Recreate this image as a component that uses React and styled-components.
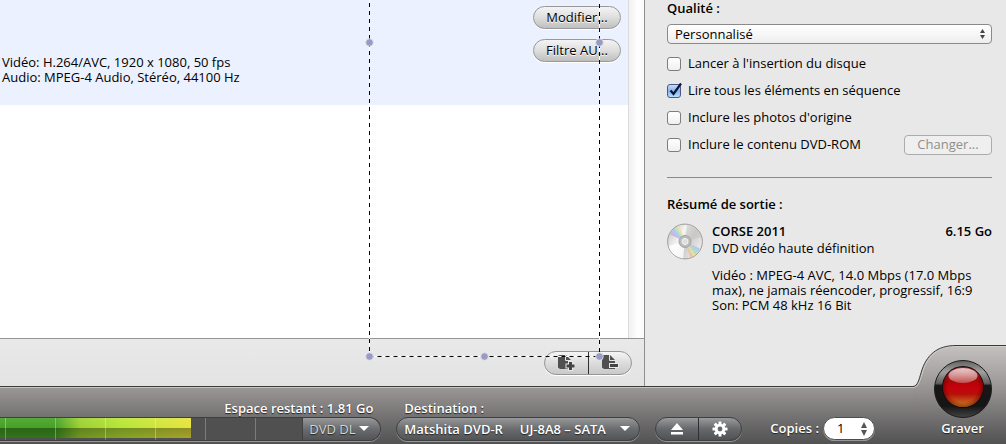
import { useState } from "react";
import styled, { createGlobalStyle, css } from "styled-components";

const GlobalStyle = createGlobalStyle`
  * {
    box-sizing: border-box;
  }

  body {
    margin: 0;
    background: #e8e8e8;
  }

  body, button, input, select {
    font-family: 'Open Sans', 'Noto Sans', sans-serif;
    font-size: 13px;
    line-height: 15px;
    color: #000;
  }
`

const Window = styled.div`
  display: flex;
  flex-direction: column;
  min-height: 100vh;
  overflow: hidden;
`
const Main = styled.main`
  flex: 1;
  display: flex;
`
const ContentPane = styled.section`
  position: relative;
  flex: 1;
  display: flex;
  flex-direction: column;
  border-right: 1px solid #8e8e8e;
`
const ListArea = styled.div`
  flex: 1;
  display: flex;
  background: #fff;
`
const List = styled.div`
  flex: 1;
`
const ScrollGutter = styled.div`
  width: 16px;
  border-left: 1px solid #dcdcdc;
  background: linear-gradient(to right, #f1f1f1, #fff 60%, #fafafa);
`
const ClipRow = styled.div`
  display: flex;
  justify-content: space-between;
  align-items: flex-start;
  padding: 6px 7px 20px 2px;
  background: #ebf1fe;
`
const ClipInfo = styled.p`
  align-self: flex-end;
  margin: 0;
`
const ClipActions = styled.div`
  display: flex;
  flex-direction: column;
  gap: 10px;
  padding-bottom: 23px;
`
const PillButton = styled.button`
  width: 88px;
  height: 23px;
  padding: 0;
  border: 1px solid #979899;
  border-radius: 12px;
  background: linear-gradient(#f4f4f4, #dedede 50%, #bfbfbf);
  box-shadow: 0 1px 0 #fff;
  text-shadow: 0 1px 0 #fff;
  font-weight: 500;
`
const ActionBar = styled.div`
  display: flex;
  justify-content: flex-end;
  align-items: center;
  height: 48px;
  padding-right: 12px;
  border-top: 1px solid #959595;
  background: linear-gradient(#e9e9e9, #e3e3e3);
`
const Segmented = styled.div`
  display: flex;
  height: 24px;
  border-radius: 12px;
  overflow: hidden;

  ${({ $dark }) => $dark ? css`
    width: 87px;
    border: 1px solid #3f4041;
    background: linear-gradient(#9a9b9d, #66686b 50%, #4f5153);
    box-shadow: 0 1px 0 #979797;
  ` : css`
    width: 88px;
    border: 1px solid #969696;
    background: linear-gradient(#f5f5f5, #dcdcdc 50%, #c9c9c9);
    box-shadow: 0 1px 0 #fff;
  `}
`
const Segment = styled.button`
  flex: 1;
  display: flex;
  justify-content: center;
  align-items: center;
  padding: 0;
  border: 0;
  background: none;

  & + & {
    border-left: 1px solid ${({ $dark }) => $dark ? '#2f2f2f' : '#969696'};
  }
`
const SelectionOverlay = styled.svg`
  position: absolute;
  top: 0;
  right: 40px;
  pointer-events: none;
`

const Sidebar = styled.aside`
  width: 361px;
  padding: 0 14px 0 22px;
  background: #e8e8e8;
`
const SidebarTitle = styled.h2`
  margin: 0;
  font-size: 13px;
  line-height: 16px;
  font-weight: 600;
`
const SelectWrapper = styled.div`
  position: relative;

  svg {
    position: absolute;
    top: 50%;
    right: ${({ $inset }) => $inset}px;
    transform: translateY(-50%);
    pointer-events: none;
  }
`
const QualitySelect = styled.select`
  appearance: none;
  display: block;
  width: 100%;
  height: 20px;
  margin: 8px 0 6px;
  padding: 0 7px;
  border: 1px solid #8a8a8a;
  border-radius: 4px;
  background: linear-gradient(#fff, #f7f7f7 50%, #ededed);
  line-height: 16px;
`
const OptionRow = styled.div`
  display: flex;
  justify-content: space-between;
  align-items: center;
  height: 27px;
`
const OptionLabel = styled.label`
  display: flex;
  align-items: center;
  gap: 7px;
`
const CheckWrapper = styled.span`
  position: relative;
  display: flex;

  svg {
    position: absolute;
    top: -2px;
    left: 0;
    pointer-events: none;
  }
`
const CheckInput = styled.input`
  appearance: none;
  width: 14px;
  height: 14px;
  margin: 0;
  border: 1px solid #7d7d7d;
  border-radius: 3px;
  background: linear-gradient(#fff, #f0f0f0);

  &:checked {
    border-color: #4c5688;
    background: linear-gradient(#c9dcf6, #86b2ec 50%, #b5e0ff);
  }
`
const ChangeButton = styled.button`
  width: 88px;
  height: 20px;
  padding: 0;
  border: 1px solid #ababab;
  border-radius: 4px;
  background: #efefef;
  color: #8e8e8e;
`
const Divider = styled.hr`
  height: 1px;
  margin: 19px 0 18px;
  border: 0;
  background: #8a8a8a;
`
const Summary = styled.div`
  display: flex;
  gap: 9px;
  margin-top: 11px;
`
const SummaryText = styled.div`
  flex: 1;

  p {
    margin: 0;
  }
`
const SummaryHead = styled.div`
  display: flex;
  justify-content: space-between;
  padding-bottom: 2px;
  line-height: 16px;
  font-weight: 600;
`
const SummaryDetails = styled.p`
  padding-top: 12px;
`

const Footer = styled.footer`
  display: flex;
  align-items: flex-start;
  height: 58px;
  border-top: 1px solid #3c3a3a;
  background: linear-gradient(#c8c4c4 0 1px, #9b9696 1px, #757373 50%, #525252);
  color: #fff;
  text-shadow: 0 1px 1px #222;
  font-weight: 600;
`
const DiscSpace = styled.div`
  flex: 1;
  padding-top: 14px;
`
const SpaceLabel = styled.div`
  padding-right: 8px;
  text-align: right;
`
const FooterLabel = styled.label`
  display: block;
  padding-left: 8px;
`
const GaugeRow = styled.div`
  display: flex;
  height: 24px;
  margin-top: 1px;
  border: 1px solid #3f3f3f;
  border-left: 0;
  border-radius: 0 12px 12px 0;
  box-shadow: 0 1px 0 #979797;
  overflow: hidden;
`
const Gauge = styled.div`
  flex: 1;
  background:
    repeating-linear-gradient(to right, transparent 0 5px, #ffffff40 5px 6px, transparent 6px 50px),
    #505050;
`
const GaugeFill = styled.div`
  height: 20px;
  background:
    repeating-linear-gradient(to right, transparent 0 5px, #ffffff50 5px 6px, transparent 6px 50px),
    linear-gradient(#ffffff18, transparent 49%, #00000060 50%, #00000048),
    linear-gradient(to right, #45a125 0 29%, #9dd030 42%, #b8e636 65%, #e8e33c);
`
const FooterSelect = styled.select`
  appearance: none;
  display: block;
  width: ${({ $width }) => $width}px;
  height: ${({ $attached }) => $attached ? 22 : 24}px;
  margin-top: ${({ $attached }) => $attached ? 0 : 1}px;
  padding: 0 ${({ $attached }) => $attached ? 6 : 7}px;
  border: ${({ $attached }) => $attached ? '0' : '1px solid #3f4041'};
  border-left: 1px solid #3f4041;
  border-radius: ${({ $attached }) => $attached ? '0 12px 12px 0' : '12px'};
  background: linear-gradient(#97989a, #6a6c6f 50%, #515355);
  box-shadow: ${({ $attached }) => $attached ? 'none' : '0 1px 0 #979797'};
  color: ${({ $attached }) => $attached ? '#d8d8d8' : '#fff'};
  font-weight: ${({ $attached }) => $attached ? 400 : 600};
  text-shadow: 0 1px 1px #222;
  white-space: pre;
`
const Destination = styled.div`
  margin-left: 15px;
  padding-top: 14px;
`
const Tools = styled.div`
  margin: 30px 0 0 15px;
`
const Copies = styled.div`
  display: flex;
  align-items: center;
  gap: 4px;
  margin: 30px 38px 0 28px;
`
const CopiesField = styled.div`
  display: flex;
  align-items: center;
  width: 52px;
  height: 23px;
  padding: 0 5px 0 11px;
  border: 1px solid #4c4c4c;
  border-radius: 12px;
  background: #fff;
  box-shadow: 0 1px 0 #979797;
`
const CopiesInput = styled.input`
  width: 100%;
  min-width: 0;
  padding: 0 2px;
  border: 0;
  background: none;
  outline: none;
`
const Stepper = styled.div`
  display: flex;
  flex-direction: column;
`
const StepButton = styled.button`
  display: flex;
  width: 10px;
  padding: 1px;
  border: 0;
  background: none;
`
const BurnCorner = styled.div`
  position: relative;
  display: flex;
  flex-direction: column;
  align-items: center;
  width: 93px;
  height: 99px;
  margin-top: -42px;
  padding: 14px 0 0 6px;
`
const CornerShape = styled.svg`
  position: absolute;
  top: 0;
  left: 0;
`
const BurnButton = styled.button`
  position: relative;
  display: flex;
  flex-direction: column;
  align-items: center;
  gap: 2px;
  padding: 0;
  border: 0;
  background: none;
  color: #fff;
  font-weight: 600;
  text-shadow: 0 1px 1px #222;
`

const UpDownArrows = () => (
  <svg width="5" height="10" viewBox="0 0 5 10" fill="#444">
    <path d="M2.5 0 5 4H0z M0 6h5L2.5 10z" />
  </svg>
)

const DownArrow = () => (
  <svg width="10" height="6" viewBox="0 0 10 6" fill="#fff">
    <path d="M0 0h10L5 5z" />
  </svg>
)

const PageIcon = ({ remove }) => (
  <svg width="18" height="18" viewBox="0 0 18 18">
    <path d="M1 2.5Q1 1 2.500 1H9l5 5v9H3L1 13.500z" fill="#505050" />
    <path d="M8.500 1v5.500H14" fill="none" stroke="#e4e4e4" />
    {remove ? (
      <path d="M9 10h8v3H9z" fill="#444" stroke="#e8e8e8" strokeWidth="2" paintOrder="stroke" />
    ) : (
      <path
        d="M12 8h3v2.500h2.500v3H15V16h-3v-2.500H9.500v-3H12z"
        fill="#444"
        stroke="#e8e8e8"
        strokeWidth="2"
        paintOrder="stroke"
      />
    )}
  </svg>
)

const EjectIcon = () => (
  <svg width="14" height="14" viewBox="0 0 14 14" fill="#fff">
    <path d="M7 1l6 7H1z M1 10h12v2.4H1z" />
  </svg>
)

const GearIcon = () => (
  <svg width="16" height="16" viewBox="0 0 16 16">
    <g fill="#fff">
      {[0, 45, 90, 135].map((angle) => (
        <rect key={angle} x="6.5" y="0.5" width="3" height="15" rx="0.6" transform={`rotate(${angle} 8 8)`} />
      ))}
      <circle cx="8" cy="8" r="5.2" />
    </g>
    <circle cx="8" cy="8" r="2.4" fill="#66686b" />
  </svg>
)

const DiscIcon = () => (
  <svg width="36" height="37" viewBox="0 0 36 37">
    <defs>
      <linearGradient id="disc" x1="0" y1="0.2" x2="1" y2="0.8">
        <stop offset="0" stopColor="#c9c6c6" />
        <stop offset="0.35" stopColor="#f6f5f5" />
        <stop offset="0.6" stopColor="#d2cece" />
        <stop offset="1" stopColor="#f2f2f2" />
      </linearGradient>
    </defs>
    <circle cx="18" cy="18.5" r="17.4" fill="url(#disc)" stroke="#9c9c9c" />
    <path d="M18 18.5 20 1.5A17 17 0 0 1 34.5 14z" fill="#c3bfc0" opacity="0.5" />
    <path d="M18 18.5 16 35.5A17 17 0 0 1 1.5 23z" fill="#fff" opacity="0.8" />
    <path d="M18 18.5 3.2 11.5A17 17 0 0 1 5 8z" fill="#c9b5e6" />
    <path d="M18 18.5 5 8A17 17 0 0 1 7.5 5.5z" fill="#a6cdee" />
    <path d="M18 18.5 7.5 5.5A17 17 0 0 1 10 4z" fill="#b9e3c0" />
    <path d="M18 18.5 10 4A17 17 0 0 1 12.5 2.6z" fill="#eedfae" />
    <path d="M18 18.5 23.5 34.4A17 17 0 0 0 26 33.2z" fill="#edc0a5" />
    <path d="M18 18.5 26 33.2A17 17 0 0 0 28.5 31.5z" fill="#e6dfa2" />
    <path d="M18 18.5 28.5 31.5A17 17 0 0 0 31 29z" fill="#b2dfb9" />
    <path d="M18 18.5 31 29A17 17 0 0 0 32.8 25.5z" fill="#b3cbea" />
    <circle cx="18" cy="18.5" r="6" fill="#bcbcbc" stroke="#a4a4a4" />
    <circle cx="18" cy="18.5" r="3" fill="#dedede" stroke="#f4f4f4" />
  </svg>
)

const BurnIcon = () => (
  <svg width="60" height="60" viewBox="0 0 60 60">
    <defs>
      <linearGradient id="ring" x1="0" y1="0" x2="0" y2="1">
        <stop offset="0" stopColor="#606060" />
        <stop offset="0.2" stopColor="#a0a0a0" />
        <stop offset="0.4" stopColor="#606060" />
        <stop offset="0.44" stopColor="#171717" />
        <stop offset="0.8" stopColor="#151515" />
        <stop offset="1" stopColor="#444" />
      </linearGradient>
      <linearGradient id="ball" x1="0" y1="0" x2="0" y2="1">
        <stop offset="0" stopColor="#b84040" />
        <stop offset="0.35" stopColor="#a80808" />
        <stop offset="0.5" stopColor="#c8000a" />
        <stop offset="0.68" stopColor="#b5100a" />
        <stop offset="1" stopColor="#d08a25" />
      </linearGradient>
      <radialGradient id="shade">
        <stop offset="0.75" stopColor="#600" stopOpacity="0" />
        <stop offset="1" stopColor="#500" stopOpacity="0.5" />
      </radialGradient>
      <linearGradient id="gloss" x1="0" y1="0" x2="0" y2="1">
        <stop offset="0" stopColor="#fff" stopOpacity="0.75" />
        <stop offset="1" stopColor="#fff" stopOpacity="0.3" />
      </linearGradient>
    </defs>
    <circle cx="30" cy="30" r="28.5" fill="url(#ring)" stroke="#1c1c1c" />
    <circle cx="30" cy="28" r="21" fill="#1a0808" />
    <circle cx="30" cy="28" r="20" fill="url(#ball)" />
    <circle cx="30" cy="28" r="20" fill="url(#shade)" />
    <ellipse cx="30" cy="16.5" rx="14.5" ry="7.5" fill="url(#gloss)" />
  </svg>
)

const Check = ({ label, defaultChecked }) => {
  const [checked, setChecked] = useState(Boolean(defaultChecked))
  return (
    <OptionLabel>
      <CheckWrapper>
        <CheckInput type="checkbox" checked={checked} onChange={() => setChecked(!checked)} />
        {checked && (
          <svg width="16" height="16" viewBox="0 0 16 16">
            <path d="M3.5 8.5 6.5 12 14 1.5" fill="none" stroke="#0c1638" strokeWidth="2.2" />
          </svg>
        )}
      </CheckWrapper>
      {label}
    </OptionLabel>
  )
}

const handles = [[5, 42], [235, 42], [5, 356], [120, 356], [235, 356]]

const App = () => {
  const [copies, setCopies] = useState(1)

  return (
    <>
      <GlobalStyle />
      <Window>
        <Main>
          <ContentPane>
            <ListArea>
              <List>
                <ClipRow>
                  <ClipInfo>
                    Vidéo: H.264/AVC, 1920 x 1080, 50 fps<br />
                    Audio: MPEG-4 Audio, Stéréo, 44100 Hz
                  </ClipInfo>
                  <ClipActions>
                    <PillButton type="button">Modifier...</PillButton>
                    <PillButton type="button">Filtre AU...</PillButton>
                  </ClipActions>
                </ClipRow>
              </List>
              <ScrollGutter />
            </ListArea>
            <ActionBar>
              <Segmented>
                <Segment type="button" aria-label="Ajouter"><PageIcon /></Segment>
                <Segment type="button" aria-label="Supprimer"><PageIcon remove /></Segment>
              </Segmented>
            </ActionBar>
            <SelectionOverlay width="240" height="362" viewBox="0 0 240 362">
              <path d="M5.5 0V356.5H235.5V0" fill="none" stroke="#fff" />
              <path d="M5.5 3V356.5 M5.5 356.5H235.5 M235.5 4V356.5" fill="none" stroke="#000" strokeDasharray="4 4" />
              {handles.map(([x, y]) => (
                <circle key={`${x}-${y}`} cx={x + 0.5} cy={y + 0.5} r="3.8" fill="#9a9ac2" stroke="#e4e4f2" strokeWidth="0.8" />
              ))}
            </SelectionOverlay>
          </ContentPane>

          <Sidebar>
            <SidebarTitle as="label" htmlFor="quality">Qualité :</SidebarTitle>
            <SelectWrapper $inset={7}>
              <QualitySelect id="quality">
                <option>Personnalisé</option>
              </QualitySelect>
              <UpDownArrows />
            </SelectWrapper>
            <OptionRow><Check label="Lancer à l'insertion du disque" /></OptionRow>
            <OptionRow><Check label="Lire tous les éléments en séquence" defaultChecked /></OptionRow>
            <OptionRow><Check label="Inclure les photos d'origine" /></OptionRow>
            <OptionRow>
              <Check label="Inclure le contenu DVD-ROM" />
              <ChangeButton type="button" disabled>Changer...</ChangeButton>
            </OptionRow>
            <Divider />
            <SidebarTitle>Résumé de sortie :</SidebarTitle>
            <Summary>
              <DiscIcon />
              <SummaryText>
                <SummaryHead>
                  <span>CORSE 2011</span>
                  <span>6.15 Go</span>
                </SummaryHead>
                <p>DVD vidéo haute définition</p>
                <SummaryDetails>
                  Vidéo : MPEG-4 AVC, 14.0 Mbps (17.0 Mbps max), ne jamais réencoder, progressif, 16:9<br />
                  Son: PCM 48 kHz 16 Bit
                </SummaryDetails>
              </SummaryText>
            </Summary>
          </Sidebar>
        </Main>

        <Footer>
          <DiscSpace>
            <SpaceLabel>Espace restant : 1.81 Go</SpaceLabel>
            <GaugeRow>
              <Gauge>
                <GaugeFill style={{ width: `${(191 / 303) * 100}%` }} />
              </Gauge>
              <SelectWrapper $inset={11}>
                <FooterSelect $width={78} $attached aria-label="Type de disque">
                  <option>DVD DL</option>
                </FooterSelect>
                <DownArrow />
              </SelectWrapper>
            </GaugeRow>
          </DiscSpace>
          <Destination>
            <FooterLabel htmlFor="destination">Destination :</FooterLabel>
            <SelectWrapper $inset={10}>
              <FooterSelect id="destination" $width={244}>
                <option>{'Matshita DVD-R\u00a0\u00a0\u00a0\u00a0 UJ-8A8 – SATA'}</option>
              </FooterSelect>
              <DownArrow />
            </SelectWrapper>
          </Destination>
          <Tools>
            <Segmented $dark>
              <Segment $dark type="button" aria-label="Éjecter"><EjectIcon /></Segment>
              <Segment $dark type="button" aria-label="Options"><GearIcon /></Segment>
            </Segmented>
          </Tools>
          <Copies>
            <label htmlFor="copies">Copies :</label>
            <CopiesField>
              <CopiesInput
                id="copies"
                inputMode="numeric"
                value={copies}
                onChange={(e) => setCopies(Number(e.target.value) || 1)}
              />
              <Stepper>
                <StepButton type="button" aria-label="Plus" onClick={() => setCopies(copies + 1)}>
                  <svg width="8" height="6" viewBox="0 0 8 6" fill="#555"><path d="M4 0 7 6H1z" /></svg>
                </StepButton>
                <StepButton type="button" aria-label="Moins" onClick={() => setCopies(Math.max(1, copies - 1))}>
                  <svg width="8" height="6" viewBox="0 0 8 6" fill="#555"><path d="M1 0h6L4 6z" /></svg>
                </StepButton>
              </Stepper>
            </CopiesField>
          </Copies>
          <BurnCorner>
            <CornerShape width="93" height="99" viewBox="0 0 93 99">
              <defs>
                <linearGradient id="corner" x1="0" y1="0" x2="0" y2="1">
                  <stop offset="0" stopColor="#c6c1c1" />
                  <stop offset="0.42" stopColor="#9b9696" />
                  <stop offset="0.71" stopColor="#757373" />
                  <stop offset="1" stopColor="#525252" />
                </linearGradient>
              </defs>
              <path d="M0 99V42C5 41 6 34 8 28C13 10 24 0.5 43 0.5H93V99z" fill="url(#corner)" />
              <path d="M0 42.5C6 42 7 35 9 29C14 11 25 1.5 43 1.5H93" fill="none" stroke="#d2cece" />
              <path d="M0 41.5C5 41 6 34 8 28C13 10 24 0.5 43 0.5H93" fill="none" stroke="#3c3a3a" />
            </CornerShape>
            <BurnButton type="button">
              <BurnIcon />
              Graver
            </BurnButton>
          </BurnCorner>
        </Footer>
      </Window>
    </>
  )
}

export default App;
